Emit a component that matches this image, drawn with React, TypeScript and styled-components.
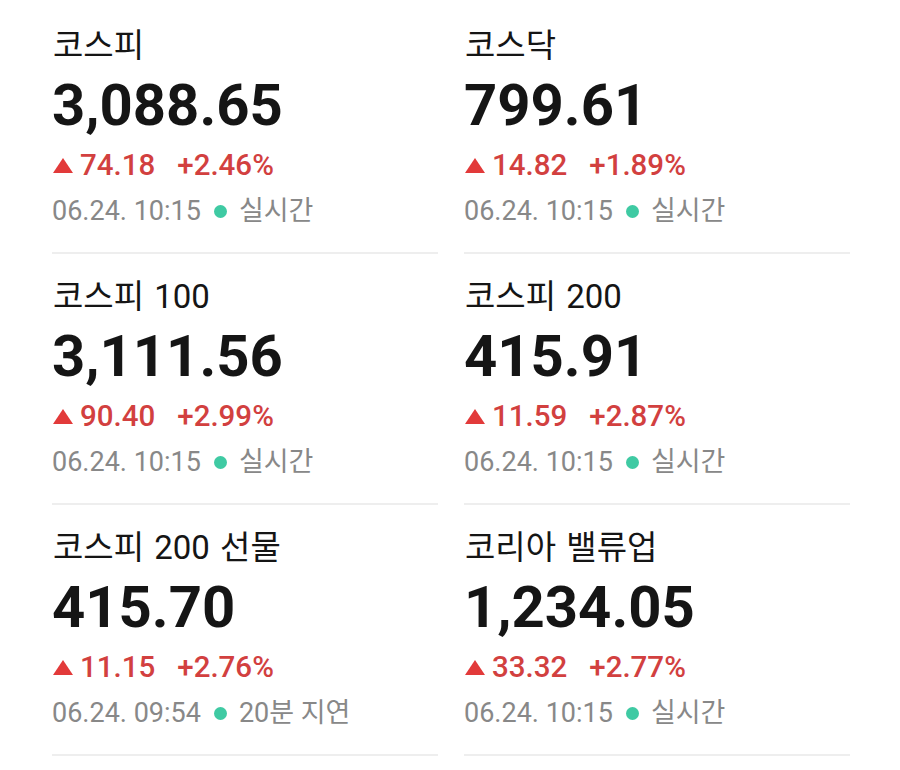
import React from "react";
import styled, { createGlobalStyle } from "styled-components";

const Global = createGlobalStyle`
  html, body { margin: 0; padding: 0; background: #ffffff; }
  body { font-family: Roboto, "Noto Sans CJK KR", sans-serif; -webkit-font-smoothing: antialiased; }
`;

const Grid = styled.div`
  display: grid;
  grid-template-columns: 386px 386px;
  column-gap: 26px;
  padding: 3px 50px 0 52px;
`;

const Card = styled.div`
  padding: 23px 0 24px;
  border-bottom: 2px solid #eeeeee;
`;

const Title = styled.div`
  font-size: 33px;
  line-height: 40px;
  color: #151515;
  font-weight: 400;
  padding-left: 1px;
  word-spacing: 2px;
`;

const Value = styled.div`
  margin-top: 5px;
  font-size: 58px;
  line-height: 68px;
  font-weight: 700;
  color: #151515;
`;

const Change = styled.div`
  margin-top: 8px;
  font-size: 29.5px;
  line-height: 36px;
  font-weight: 500;
  color: #d2403f;
  display: flex;
  align-items: baseline;
  padding-left: 1px;
`;

const Triangle = styled.span`
  display: inline-block;
  width: 0;
  height: 0;
  border-left: 10px solid transparent;
  border-right: 10px solid transparent;
  border-bottom: 15px solid #e23a3a;
  margin-right: 7px;
  transform: translateY(-2px);
`;

const Rate = styled.span`
  margin-left: 22px;
`;

const Meta = styled.div`
  margin-top: 11px;
  font-size: 27px;
  line-height: 34px;
  color: #888888;
  display: flex;
  align-items: center;
`;

const Dot = styled.span`
  width: 13px;
  height: 13px;
  border-radius: 50%;
  background: #3fcaa3;
  margin: 0 12px 0 13px;
`;

type Item = { name: string; value: string; diff: string; rate: string; time: string; status: string };

const items: Item[] = [
  { name: "코스피", value: "3,088.65", diff: "74.18", rate: "+2.46%", time: "06.24. 10:15", status: "실시간" },
  { name: "코스닥", value: "799.61", diff: "14.82", rate: "+1.89%", time: "06.24. 10:15", status: "실시간" },
  { name: "코스피 100", value: "3,111.56", diff: "90.40", rate: "+2.99%", time: "06.24. 10:15", status: "실시간" },
  { name: "코스피 200", value: "415.91", diff: "11.59", rate: "+2.87%", time: "06.24. 10:15", status: "실시간" },
  { name: "코스피 200 선물", value: "415.70", diff: "11.15", rate: "+2.76%", time: "06.24. 09:54", status: "20분 지연" },
  { name: "코리아 밸류업", value: "1,234.05", diff: "33.32", rate: "+2.77%", time: "06.24. 10:15", status: "실시간" },
];

export default function App() {
  return (
    <>
      <Global />
      <Grid>
        {items.map((it) => (
          <Card key={it.name}>
            <Title>{it.name}</Title>
            <Value>{it.value}</Value>
            <Change>
              <Triangle />
              <span>{it.diff}</span>
              <Rate>{it.rate}</Rate>
            </Change>
            <Meta>
              <span>{it.time}</span>
              <Dot />
              <span>{it.status}</span>
            </Meta>
          </Card>
        ))}
      </Grid>
    </>
  );
}
